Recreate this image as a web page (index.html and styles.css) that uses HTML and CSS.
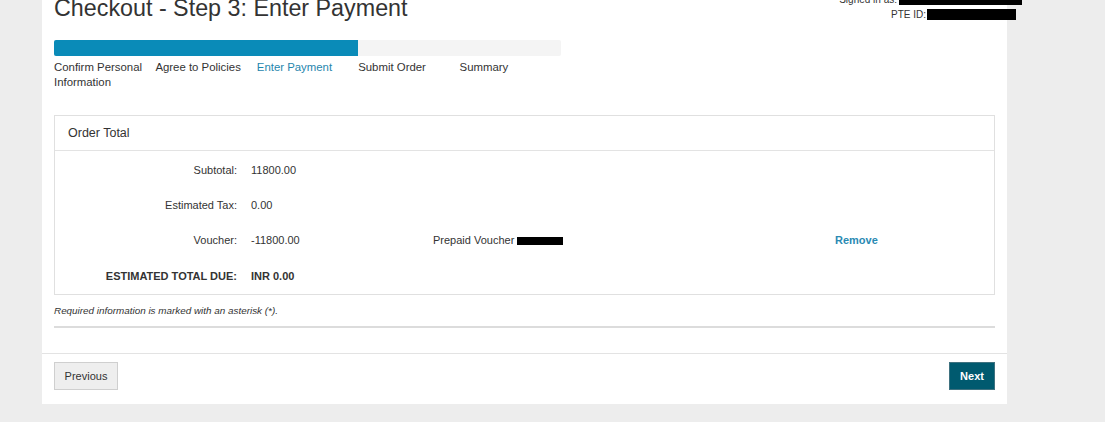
FILE: index.html
```html
<!DOCTYPE html>
<html lang="en">
<head>
<meta charset="utf-8">
<title>Checkout - Step 3: Enter Payment</title>
<link rel="stylesheet" href="styles.css">
</head>
<body>
<div class="page">
  <div class="header">
    <h1 class="title">Checkout - Step 3: Enter Payment</h1>
    <div class="user">
      <div class="user-line">Signed in as: <span class="redact redact-name"></span></div>
      <div class="user-line user-line-id">PTE ID:<span class="redact redact-id"></span></div>
    </div>
  </div>

  <div class="progress"><div class="progress-fill" style="width:60%"></div></div>
  <div class="steps">
    <div class="step">Confirm Personal Information</div>
    <div class="step">Agree to Policies</div>
    <div class="step step-active">Enter Payment</div>
    <div class="step">Submit Order</div>
    <div class="step">Summary</div>
  </div>

  <div class="panel">
    <div class="panel-head">Order Total</div>
    <div class="panel-body">
      <div class="row">
        <div class="cell-label">Subtotal:</div>
        <div class="cell-value">11800.00</div>
        <div></div><div></div>
      </div>
      <div class="row">
        <div class="cell-label">Estimated Tax:</div>
        <div class="cell-value">0.00</div>
        <div></div><div></div>
      </div>
      <div class="row">
        <div class="cell-label">Voucher:</div>
        <div class="cell-value">-11800.00</div>
        <div class="cell-desc">Prepaid Voucher <span class="redact redact-voucher"></span></div>
        <div class="cell-action"><a class="link" href="#">Remove</a></div>
      </div>
      <div class="row row-total">
        <div class="cell-label">ESTIMATED TOTAL DUE:</div>
        <div class="cell-value">INR 0.00</div>
        <div></div><div></div>
      </div>
    </div>
  </div>

  <p class="note">Required information is marked with an asterisk (*).</p>
  <div class="rule"></div>

  <div class="actions">
    <button class="btn btn-secondary">Previous</button>
    <button class="btn btn-primary">Next</button>
  </div>
</div>
</body>
</html>
```

FILE: styles.css
```css
html, body {
  margin: 0;
  padding: 0;
}
body {
  background: #ededed;
  font-family: "Liberation Sans", Arial, sans-serif;
  color: #333;
  height: 422px;
  overflow: hidden;
}
.page {
  margin-left: 42px;
  width: 965px;
  background: #fff;
  padding-bottom: 14px;
}
.header {
  display: flex;
  justify-content: space-between;
  align-items: flex-start;
  padding: 0 12px;
  height: 21px;
}
.title {
  margin: -5px 0 0;
  font-size: 23.3px;
  line-height: 26px;
  font-weight: normal;
  color: #333;
}
.user {
  margin-top: -8px;
  margin-right: -27px;
  font-size: 10px;
  line-height: 14px;
  text-align: right;
  color: #333;
}
.user-line {
  display: flex;
  justify-content: flex-end;
  align-items: center;
  height: 15px;
}
.user-line-id {
  padding-right: 6px;
}
.redact {
  display: inline-block;
  background: #000;
}
.redact-name {
  width: 123px;
  height: 11px;
  margin-left: 2px;
}
.redact-id {
  width: 89px;
  height: 11px;
  margin-left: 1px;
}
.redact-voucher {
  width: 46px;
  height: 8px;
  vertical-align: -1px;
}
.progress {
  margin: 19px 12px 0;
  width: 507px;
  height: 16px;
  background: #f4f4f4;
  border-radius: 2px;
  overflow: hidden;
}
.progress-fill {
  height: 100%;
  background: #0a8bb8;
}
.steps {
  display: grid;
  grid-template-columns: repeat(5, 101.4px);
  margin: 4px 12px 0;
  font-size: 11.4px;
  line-height: 15px;
}
.step {
  padding-right: 8px;
}
.step-active {
  color: #1f86ad;
}
.panel {
  margin: 25px 12px 0;
  border: 1px solid #e0e0e0;
}
.panel-head {
  height: 34px;
  display: flex;
  align-items: center;
  padding-left: 13px;
  font-size: 12.5px;
  border-bottom: 1px solid #e3e3e3;
}
.panel-body {
  padding: 1px 0 2px;
}
.row {
  display: grid;
  grid-template-columns: 182px 168px 388px auto;
  column-gap: 14px;
  height: 35px;
  box-sizing: border-box;
  align-items: center;
  font-size: 11px;
}
.cell-label {
  text-align: right;
}
.row-total {
  font-weight: bold;
  padding-top: 3px;
}
.link {
  color: #2a8ab3;
  font-weight: bold;
  text-decoration: none;
}
.note {
  margin: 10px 12px 0;
  font-size: 9.9px;
  line-height: 12px;
  font-style: italic;
  color: #333;
}
.rule {
  margin: 9px 12px 0;
  height: 2px;
  background: #dcdcdc;
}
.actions {
  margin-top: 25px;
  border-top: 1px solid #e3e3e3;
  padding: 8px 12px 0;
  display: flex;
  justify-content: space-between;
}
.btn {
  height: 28px;
  font-family: "Liberation Sans", Arial, sans-serif;
  font-size: 11px;
  cursor: pointer;
  border-radius: 0;
}
.btn-secondary {
  width: 64px;
  background: #eeeeee;
  border: 1px solid #cfcfcf;
  color: #333;
}
.btn-primary {
  width: 46px;
  background: #005a6f;
  border: 1px solid #3f7280;
  color: #fff;
  font-weight: bold;
}
```
